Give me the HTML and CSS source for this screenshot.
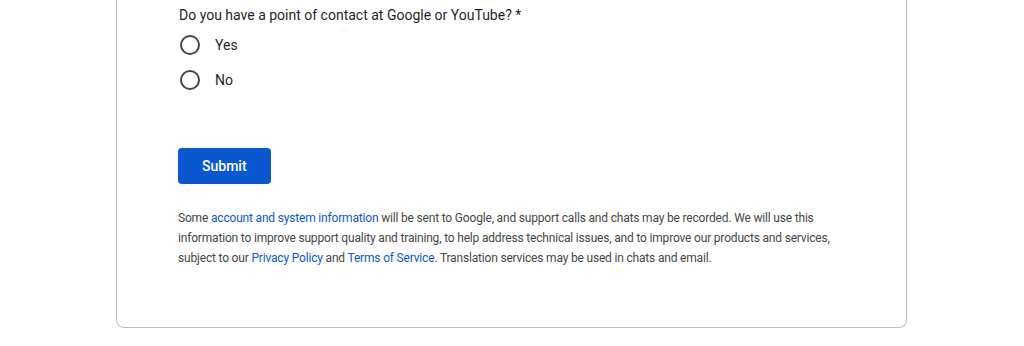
FILE: index.html
```html
<!DOCTYPE html>
<html lang="en">
<head>
    <meta charset="UTF-8">
    <meta name="viewport" content="width=device-width, initial-scale=1.0">
    <title>Contact form</title>
    <link rel="stylesheet" href="styles.css">
</head>
<body>
    <div class="card">
        <form class="form">
            <p class="question">Do you have a point of contact at Google or YouTube? *</p>
            <div class="options">
                <label class="option">
                    <span class="radio"></span>
                    <span class="option-label">Yes</span>
                </label>
                <label class="option">
                    <span class="radio"></span>
                    <span class="option-label">No</span>
                </label>
            </div>

            <button type="button" class="submit">Submit</button>

            <p class="disclaimer">
                Some <a href="#">account and system information</a> will be sent to Google, and support calls and chats may be recorded. We will use this
                information to improve support quality and training, to help address technical issues, and to improve our products and services,
                subject to our <a href="#">Privacy Policy</a> and <a href="#">Terms of Service</a>. Translation services may be used in chats and email.
            </p>
        </form>
    </div>
</body>
</html>
```

FILE: styles.css
```css
body {
    margin: 0;
    background-color: #FFFFFF;
    font-family: Roboto, "Liberation Sans", Arial, sans-serif;
    color: #1F1F1F;
}
.card {
    box-sizing: border-box;
    width: 791px;
    margin: 0 0 0 116px;
    border: 1px solid #BDBDBD;
    border-top: none;
    border-radius: 0 0 8px 8px;
    padding: 5px 60px 59px 61px;
}
.form {
    display: flex;
    flex-direction: column;
    align-items: flex-start;
}
.question {
    margin: 0 0 0 1px;
    font-size: 14px;
    line-height: 20px;
    color: #1F1F1F;
}
.options {
    display: flex;
    flex-direction: column;
    gap: 11px;
    margin-top: 8px;
}
.option {
    display: flex;
    align-items: center;
    height: 24px;
    cursor: pointer;
}
.radio {
    box-sizing: border-box;
    width: 20px;
    height: 20px;
    margin-left: 2px;
    border: 2px solid #444746;
    border-radius: 50%;
}
.option-label {
    margin-left: 15px;
    font-size: 14px;
    color: #1F1F1F;
}
.submit {
    margin-top: 56px;
    height: 36px;
    padding: 0 24px;
    border: none;
    border-radius: 4px;
    background-color: #0B57D0;
    color: #FFFFFF;
    font-family: Roboto, "Liberation Sans", Arial, sans-serif;
    font-size: 14px;
    font-weight: 500;
    cursor: pointer;
}
.disclaimer {
    margin: 24px 0 0 0;
    font-size: 12px;
    line-height: 20px;
    letter-spacing: -0.18px;
    color: #444746;
}
.disclaimer a {
    color: #0B57D0;
    text-decoration: none;
}
```
